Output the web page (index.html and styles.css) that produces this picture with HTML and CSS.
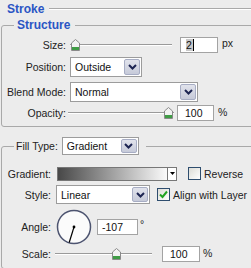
FILE: index.html
```html
<!DOCTYPE html>
<html lang="en">
<head>
  <meta charset="UTF-8" />
  <title>Stroke</title>
  <link rel="stylesheet" href="styles.css">
</head>
<body>

<div class="panel">
  <div class="panel-title"><h1>Stroke</h1></div>

  <fieldset class="group structure">
    <legend>Structure</legend>

    <div class="row row-size">
      <label>Size:</label>
      <div class="slider slider-size">
        <svg class="thumb" style="left:1px" width="9" height="12" viewBox="0 0 9 12"><path d="M0.5 4 L4.5 0.5 L8.5 4 V11.5 H0.5 Z" fill="#f2f2f2" stroke="#8a8a8a"/><rect x="1" y="8" width="7" height="3" fill="#3f9c45"/></svg>
      </div>
      <div class="field field-size"><span class="caret">2</span></div>
      <span class="unit">px</span>
    </div>

    <div class="row row-select">
      <label>Position:</label>
      <div class="select select-position">
        <span>Outside</span>
        <i class="btn"><svg width="9" height="6" viewBox="0 0 9 6"><path d="M1 1 L4.5 4.5 L8 1" fill="none" stroke="#1c2452" stroke-width="2"/></svg></i>
      </div>
    </div>

    <div class="row row-select row-blend">
      <label>Blend Mode:</label>
      <div class="select select-blend">
        <span>Normal</span>
        <i class="btn"><svg width="9" height="6" viewBox="0 0 9 6"><path d="M1 1 L4.5 4.5 L8 1" fill="none" stroke="#1c2452" stroke-width="2"/></svg></i>
      </div>
    </div>

    <div class="row row-opacity">
      <label>Opacity:</label>
      <div class="slider slider-opacity">
        <svg class="thumb" style="left:96px" width="9" height="12" viewBox="0 0 9 12"><path d="M0.5 4 L4.5 0.5 L8.5 4 V11.5 H0.5 Z" fill="#f2f2f2" stroke="#8a8a8a"/><rect x="1" y="8" width="7" height="3" fill="#3f9c45"/></svg>
      </div>
      <div class="field field-opacity">100</div>
      <span class="unit">%</span>
    </div>
  </fieldset>

  <fieldset class="group fill">
    <legend>
      <label>Fill Type:</label>
      <div class="select select-fill">
        <span>Gradient</span>
        <i class="btn"><svg width="9" height="6" viewBox="0 0 9 6"><path d="M1 1 L4.5 4.5 L8 1" fill="none" stroke="#1c2452" stroke-width="2"/></svg></i>
      </div>
    </legend>

    <div class="row row-gradient">
      <label>Gradient:</label>
      <div class="gradient">
        <span class="swatch"></span>
        <span class="drop"><svg width="5" height="3" viewBox="0 0 5 3"><path d="M0 0 H5 L2.5 3 Z" fill="#000"/></svg></span>
      </div>
      <span class="check"></span>
      <span class="check-label">Reverse</span>
    </div>

    <div class="row row-style">
      <label>Style:</label>
      <div class="select select-style">
        <span>Linear</span>
        <i class="btn"><svg width="9" height="6" viewBox="0 0 9 6"><path d="M1 1 L4.5 4.5 L8 1" fill="none" stroke="#1c2452" stroke-width="2"/></svg></i>
      </div>
      <span class="check checked"><svg width="11" height="11" viewBox="0 0 11 11"><path d="M2 5.5 L4.5 8 L9 2.5" fill="none" stroke="#22a322" stroke-width="2"/></svg></span>
      <span class="check-label">Align with Layer</span>
    </div>

    <div class="row row-angle">
      <label>Angle:</label>
      <svg class="dial" width="36" height="36" viewBox="0 0 36 36">
        <circle cx="18" cy="18" r="16.5" fill="#fbfbfb" stroke="#4d5470" stroke-width="1.5"/>
        <line x1="18" y1="18" x2="13.2" y2="33.5" stroke="#000" stroke-width="1.2"/>
        <circle cx="18" cy="18" r="1.4" fill="#000"/>
      </svg>
      <div class="field field-angle">-107</div>
      <span class="unit unit-deg">°</span>
    </div>

    <div class="row row-scale">
      <label>Scale:</label>
      <div class="slider slider-scale">
        <svg class="thumb" style="left:57px" width="9" height="12" viewBox="0 0 9 12"><path d="M0.5 4 L4.5 0.5 L8.5 4 V11.5 H0.5 Z" fill="#f2f2f2" stroke="#8a8a8a"/><rect x="1" y="8" width="7" height="3" fill="#3f9c45"/></svg>
      </div>
      <div class="field field-scale">100</div>
      <span class="unit">%</span>
    </div>
  </fieldset>
</div>

</body>
</html>
```

FILE: styles.css
```css
body {
  margin: 0;
  width: 251px;
  height: 268px;
  overflow: hidden;
  background: #ececec;
  font-family: 'Liberation Sans', Arial, sans-serif;
  font-size: 10.5px;
  color: #222;
}

.panel-title {
  display: flex;
  align-items: center;
  height: 18px;
  padding-left: 7px;
}

.panel-title h1 {
  margin: 0;
  font-size: 12px;
  font-weight: bold;
  color: #2a55c4;
}

.panel-title::after {
  content: "";
  flex: 1;
  margin-left: 5px;
  border-top: 1px solid #a9a9a9;
  border-bottom: 1px solid #fff;
}

.group {
  margin: 0 -12px 0 1px;
  padding: 0 0 5px 0;
  border: 1px solid #a9a9a9;
  border-radius: 3px;
  min-width: 0;
}

.group legend {
  margin-left: 12px;
  padding: 0 5px 0 3px;
  font-size: 12px;
  font-weight: bold;
  line-height: 14px;
  color: #2a55c4;
}

.row {
  display: flex;
  align-items: center;
}

.row label {
  flex: none;
  width: 64px;
  margin-right: 4px;
  text-align: right;
}

.row-size { height: 17px; margin-top: 4px; }
.row-select { height: 20px; margin-top: 4px; }
.row-blend { margin-top: 5px; }
.row-opacity { height: 16px; margin-top: 3px; }

/* slider */
.slider {
  position: relative;
  height: 12px;
  flex: none;
}

.slider::before {
  content: "";
  position: absolute;
  left: 0;
  right: 0;
  top: 5px;
  border-top: 1px solid #9a9a9a;
  border-bottom: 1px solid #fff;
}

.thumb {
  position: absolute;
  top: 0;
}

.slider-size { width: 102px; margin-top: 1px; }
.slider-opacity { width: 106px; margin-left: -2px; }
.slider-scale { width: 97px; margin-left: 4px; }

/* text field */
.field {
  flex: none;
  box-sizing: border-box;
  height: 16px;
  border: 1px solid #a3a3a3;
  background: #fff;
  padding-left: 7px;
  line-height: 14px;
  color: #111;
}

.field-size { width: 38px; margin-left: 8px; padding-left: 5px; }
.field-opacity { width: 37px; margin-left: 3px; }
.field-angle { width: 41px; margin-left: 5px; padding-left: 4px; }
.field-scale { width: 38px; margin-left: 10px; }

.caret {
  background: #c9c9c9;
  border-right: 1px solid #000;
  padding-right: 1px;
}

.unit {
  margin-left: 4px;
  margin-top: -3px;
}

.unit-deg { margin-left: 2px; margin-top: -6px; }
.row-scale .unit { margin-left: 3px; }

/* dropdown */
.select {
  display: flex;
  align-items: center;
  flex: none;
  box-sizing: border-box;
  height: 20px;
  border: 1px solid #9c9c9c;
  background: #fff;
  padding-left: 4px;
  color: #111;
}

.select span {
  flex: 1;
}

.select .btn {
  display: flex;
  align-items: center;
  justify-content: center;
  align-self: stretch;
  width: 14px;
  margin: 1px;
  border: 1px solid #a7adc4;
  border-radius: 2px;
  background: linear-gradient(#e1e3ec, #c6cad9);
}

.select-position { width: 72px; }
.select-blend { width: 128px; }
.select-fill { width: 77px; height: 18px; }
.select-style { width: 94px; height: 19px; margin-left: 5px; }

/* fill section */
.fill {
  margin-top: 10px;
  padding-bottom: 6px;
}

.fill legend {
  display: flex;
  align-items: center;
  margin-left: 12px;
  padding: 0 7px 0 2px;
  font-size: 10.5px;
  font-weight: normal;
  line-height: 18px;
  color: #222;
}

.fill legend label {
  margin-right: 4px;
}

.fill .row label {
  width: 49px;
  margin-right: 0;
}

.row-gradient { height: 17px; margin-top: 10px; }
.row-style { height: 19px; margin-top: 3px; }
.row-angle { height: 35px; margin-top: 5px; }
.row-scale { height: 16px; margin-top: 2px; }

.gradient {
  display: flex;
  flex: none;
  box-sizing: border-box;
  width: 120px;
  height: 14px;
  margin-left: 6px;
  border: 1px solid #777;
}

.gradient .swatch {
  flex: 1;
  background: linear-gradient(to right, #484848, #fafafa);
}

.gradient .drop {
  display: flex;
  align-items: center;
  justify-content: center;
  width: 8px;
  background: #fff;
  border-left: 1px solid #777;
}

.check {
  display: flex;
  align-items: center;
  justify-content: center;
  flex: none;
  box-sizing: border-box;
  width: 13px;
  height: 13px;
  margin-left: 11px;
  border: 1px solid #2e4d6e;
  background: linear-gradient(135deg, #dcdcd6, #fff);
}

.check.checked {
  margin-left: 7px;
}

.check-label {
  margin-left: 3px;
  white-space: nowrap;
}

.dial {
  flex: none;
  margin-left: 5px;
}
```
